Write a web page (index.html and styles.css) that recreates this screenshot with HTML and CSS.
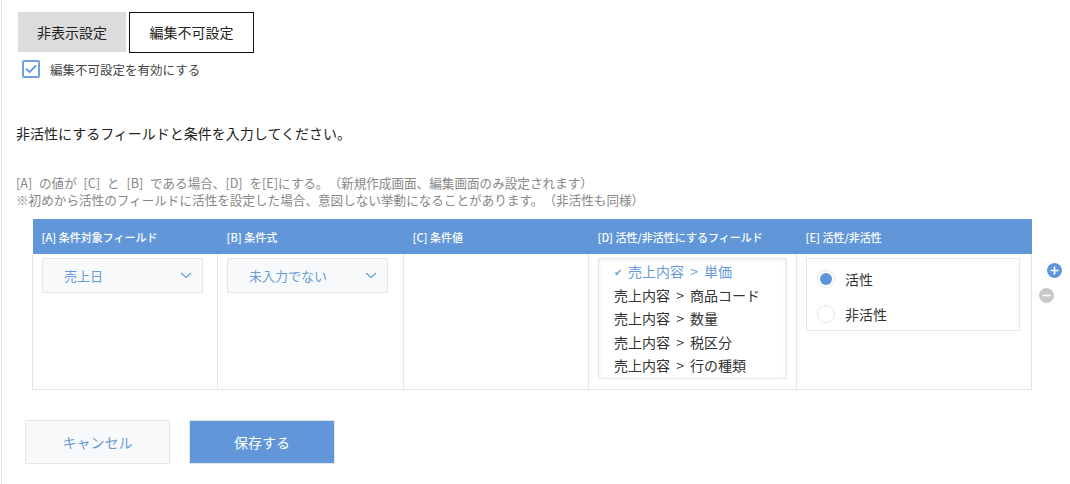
FILE: index.html
```html
<!DOCTYPE html>
<html lang="ja">
<head>
<meta charset="utf-8">
<title>編集不可設定</title>
<link rel="stylesheet" href="styles.css">
</head>
<body>
<div class="page">
  <div class="tabs">
    <div class="tab">非表示設定</div>
    <div class="tab active">編集不可設定</div>
  </div>
  <label class="enable">
    <span class="checkbox">
      <svg width="12" height="10" viewBox="0 0 12 10"><path d="M1.5 5.2 L4.6 8.2 L10.5 1.8" fill="none" stroke="#5d95d8" stroke-width="1.8" stroke-linecap="round" stroke-linejoin="round"/></svg>
    </span>
    <span class="enable-label">編集不可設定を有効にする</span>
  </label>

  <p class="lead">非活性にするフィールドと条件を入力してください。</p>

  <p class="note">[A] の値が [C] と [B] である場合、[D] を[E]にする。（新規作成画面、編集画面のみ設定されます）<br>※初めから活性のフィールドに活性を設定した場合、意図しない挙動になることがあります。（非活性も同様）</p>

  <div class="table-row">
    <table class="cond">
      <thead>
        <tr>
          <th class="c-a">[A] 条件対象フィールド</th>
          <th class="c-b">[B] 条件式</th>
          <th class="c-c">[C] 条件値</th>
          <th class="c-d">[D] 活性/非活性にするフィールド</th>
          <th class="c-e">[E] 活性/非活性</th>
        </tr>
      </thead>
      <tbody>
        <tr>
          <td>
            <div class="select"><span>売上日</span>
              <svg class="chev" width="12" height="7" viewBox="0 0 12 7"><path d="M1 1 L6 5.5 L11 1" fill="none" stroke="#6a9bd8" stroke-width="1.2"/></svg>
            </div>
          </td>
          <td>
            <div class="select"><span>未入力でない</span>
              <svg class="chev" width="12" height="7" viewBox="0 0 12 7"><path d="M1 1 L6 5.5 L11 1" fill="none" stroke="#6a9bd8" stroke-width="1.2"/></svg>
            </div>
          </td>
          <td></td>
          <td>
            <div class="multi">
              <div class="opt selected"><span class="tick">✔</span>売上内容 &gt; 単価</div>
              <div class="opt">売上内容 &gt; 商品コード</div>
              <div class="opt">売上内容 &gt; 数量</div>
              <div class="opt">売上内容 &gt; 税区分</div>
              <div class="opt">売上内容 &gt; 行の種類</div>
            </div>
          </td>
          <td>
            <div class="radios">
              <div class="radio"><span class="dot on"></span>活性</div>
              <div class="radio"><span class="dot"></span>非活性</div>
            </div>
          </td>
        </tr>
      </tbody>
    </table>
    <div class="row-ctrl">
      <span class="circle plus">
        <svg width="9" height="9" viewBox="0 0 9 9"><path d="M4.5 0.5 V8.5 M0.5 4.5 H8.5" stroke="#fff" stroke-width="1.6"/></svg>
      </span>
      <span class="circle minus">
        <svg width="9" height="9" viewBox="0 0 9 9"><path d="M0.5 4.5 H8.5" stroke="#fff" stroke-width="1.6"/></svg>
      </span>
    </div>
  </div>

  <div class="actions">
    <button class="btn cancel">キャンセル</button>
    <button class="btn save">保存する</button>
  </div>
</div>
</body>
</html>
```

FILE: styles.css
```css
html, body {
  margin: 0;
  padding: 0;
  background: #fff;
}
body {
  font-family: "Noto Sans CJK JP", "Noto Sans", "Liberation Sans", sans-serif;
  color: #333;
  text-spacing-trim: space-all;
}
.page {
  margin-left: 1px;
  border-left: 1px solid #e3e7e8;
  min-height: 484px;
  box-sizing: border-box;
  padding: 12px 0 0 14px;
}
.tabs {
  display: flex;
  align-items: flex-start;
  margin-left: 2px;
  gap: 3px;
}
.tab {
  width: 108px;
  height: 40px;
  background: #dcdcdc;
  font-size: 14px;
  line-height: 40px;
  text-align: center;
  color: #222;
}
.tab.active {
  width: 123px;
  height: 39px;
  background: #fff;
  border: 1px solid #111;
  line-height: 39px;
}
.enable {
  display: flex;
  align-items: center;
  margin: 7px 0 0 6px;
  height: 18px;
}
.checkbox {
  width: 14px;
  height: 14px;
  border: 2px solid #72a2de;
  border-radius: 2px;
  display: flex;
  align-items: center;
  justify-content: center;
  background: #fff;
}
.enable-label {
  margin-left: 10px;
  font-size: 12.5px;
  color: #444;
}
.lead {
  margin: 45px 0 0 0;
  font-size: 14px;
  line-height: 20px;
  color: #222;
}
.note {
  margin: 31px 0 0 0;
  font-size: 12.6px;
  line-height: 17px;
  color: #888;
  word-spacing: 4px;
}
.table-row {
  display: flex;
  align-items: flex-start;
  margin: 11px 0 0 16px;
}
.cond {
  border-collapse: collapse;
  table-layout: fixed;
  width: 999px;
}
.cond th {
  background: #6197d9;
  color: #fff;
  font-size: 11px;
  font-weight: 500;
  text-align: left;
  height: 35px;
  padding: 0 0 0 9px;
  box-sizing: border-box;
  white-space: nowrap;
}
.c-a { width: 185px; }
.c-b { width: 186px; }
.c-c { width: 185px; }
.c-d { width: 208px; }
.c-e { width: 235px; }
.cond td {
  border: 1px solid #e3e7e8;
  border-top: none;
  height: 135px;
  vertical-align: top;
  padding: 4px 0 0 9px;
  box-sizing: border-box;
}
.select {
  width: 161px;
  height: 35px;
  box-sizing: border-box;
  background: #f7f9fa;
  border: 1px solid #e3e7e8;
  display: flex;
  align-items: center;
  justify-content: space-between;
  padding: 0 10px 0 21px;
  font-size: 13px;
  color: #6a9bd8;
}
.chev {
  display: block;
}
.multi {
  width: 189px;
  height: 121px;
  box-sizing: border-box;
  border: 1px solid #e3e7e8;
  box-shadow: inset 0 1px 5px rgba(0, 0, 0, 0.07);
  padding: 1px 0 0 15px;
  overflow: hidden;
}
.opt {
  font-size: 14px;
  line-height: 23.5px;
  color: #333;
  white-space: nowrap;
  word-spacing: 3px;
}
.opt.selected {
  color: #6a9bd8;
}
.tick {
  display: inline-block;
  width: 14px;
  font-size: 10px;
  vertical-align: 1px;
  word-spacing: 0;
}
.radios {
  width: 214px;
  height: 73px;
  box-sizing: border-box;
  border: 1px solid #e3e7e8;
  padding: 11px 0 0 10px;
}
.radio {
  display: flex;
  align-items: center;
  height: 18px;
  font-size: 14px;
  color: #333;
  margin-bottom: 17px;
}
.dot {
  width: 16px;
  height: 16px;
  border: 1px solid #e3e7e8;
  border-radius: 50%;
  margin-right: 10px;
  position: relative;
  background: #fff;
}
.dot.on::after {
  content: "";
  position: absolute;
  left: 2px;
  top: 2px;
  width: 12px;
  height: 12px;
  border-radius: 50%;
  background: #5d95d8;
}
.row-ctrl {
  display: flex;
  flex-direction: column;
  align-items: flex-start;
  padding-top: 44px;
}
.circle {
  width: 15px;
  height: 15px;
  border-radius: 50%;
  display: flex;
  align-items: center;
  justify-content: center;
}
.plus {
  background: #6197d9;
  margin-left: 15px;
}
.minus {
  background: #c8c8c8;
  margin-left: 7px;
  margin-top: 10px;
}
.actions {
  display: flex;
  gap: 19px;
  margin: 30px 0 0 9px;
}
.btn {
  height: 44px;
  font-family: inherit;
  font-size: 14px;
  border: 1px solid #e3e7e8;
  cursor: pointer;
  padding: 0;
}
.cancel {
  width: 145px;
  background: #f7f9fa;
  color: #6a9bd8;
}
.save {
  width: 146px;
  background: #6197d9;
  color: #fff;
}
```
